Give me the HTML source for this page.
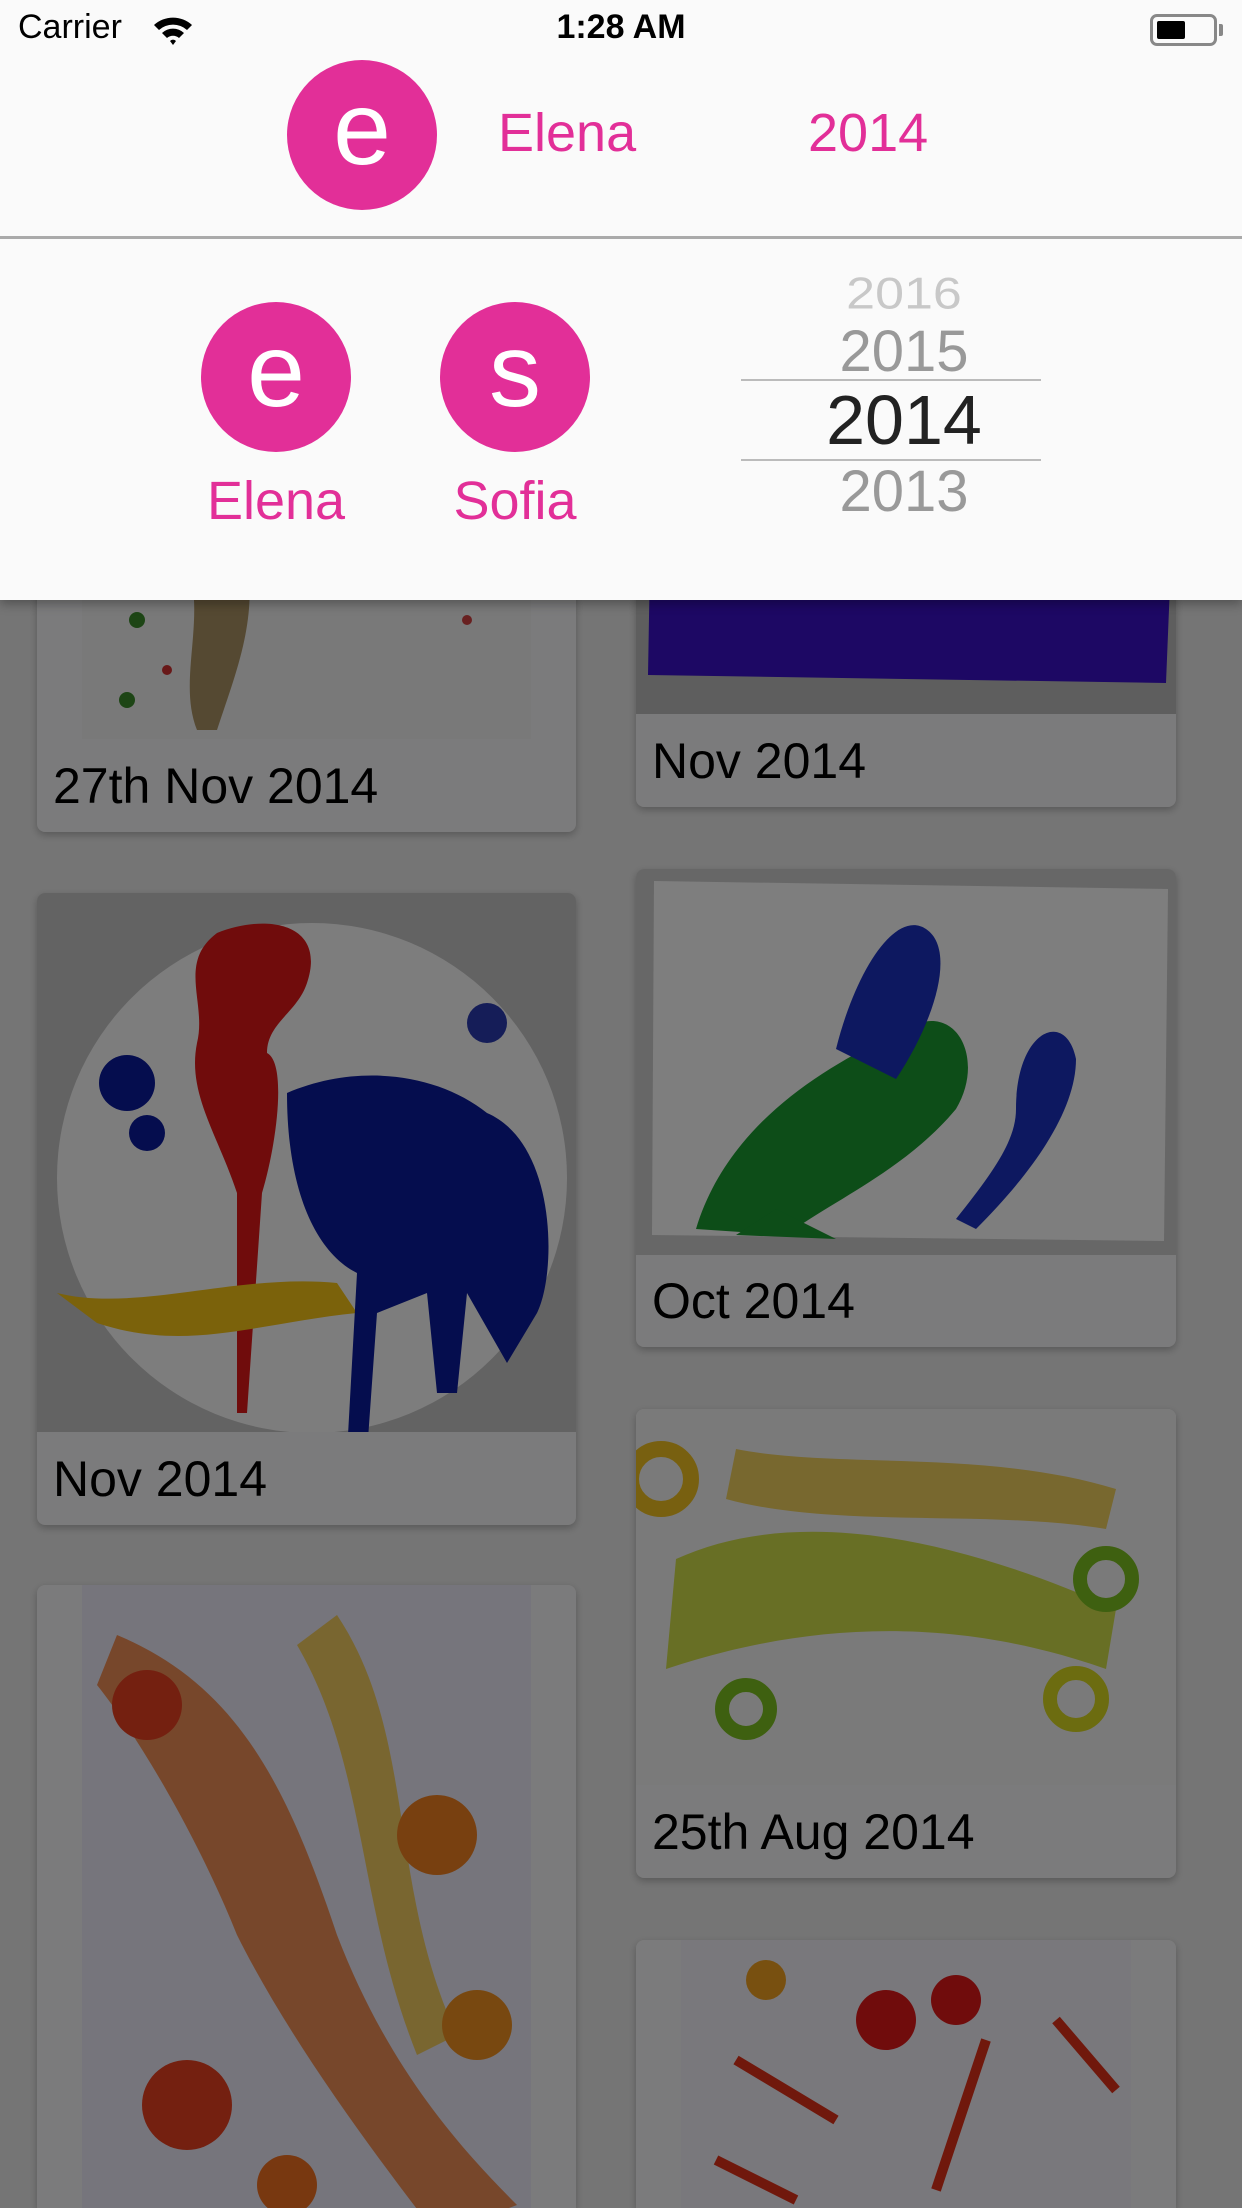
<!DOCTYPE html>
<html style="width:1242px;height:2208px;overflow:hidden"><head><meta charset="utf-8">
<style>
*{margin:0;padding:0;box-sizing:border-box}
body{width:1242px;height:2208px;overflow:hidden;position:relative;background:#ebebeb;font-family:"Liberation Sans",sans-serif}
.card{position:absolute;background:#f7f7f8;border-radius:8px;box-shadow:0 3px 8px rgba(0,0,0,.25);overflow:hidden}
.card .lbl{position:absolute;left:16px;bottom:0;height:92px;line-height:92px;font-size:50px;color:#000}
.img{position:absolute;left:0;top:0;width:100%}
#ov{position:absolute;left:0;top:0;width:1242px;height:2208px;background:rgba(0,0,0,.5)}
#hdr{position:absolute;left:0;top:0;width:1242px;height:600px;background:#fafafa;box-shadow:0 4px 10px rgba(0,0,0,.3)}
.av{position:absolute;width:150px;height:150px;border-radius:50%;background:#e22f98;color:#fff;text-align:center;line-height:138px;font-size:104px}
.pk{position:absolute;color:#e22f98;font-size:54px}
.yr{position:absolute;left:780px;width:248px;text-align:center}
</style></head><body>

<div class="card" style="left:37px;top:560px;width:539px;height:272px">
 <svg class="img" width="539" height="179" style="top:0"><rect x="45" width="449" height="179" fill="#f2f2f2"/>
 <path d="M150 0 C170 60 140 120 160 170 L180 170 C200 110 220 60 210 0Z" fill="#8b6a2a" opacity=".7"/>
 <circle cx="230" cy="20" r="14" fill="#c0202a"/><circle cx="100" cy="60" r="8" fill="#3a8a2a"/><circle cx="380" cy="30" r="8" fill="#5aa030"/><circle cx="430" cy="60" r="5" fill="#d04040"/><circle cx="90" cy="140" r="8" fill="#3a8a2a"/><circle cx="130" cy="110" r="5" fill="#d03030"/></svg>
 <div class="lbl">27th Nov 2014</div></div>

<div class="card" style="left:636px;top:560px;width:540px;height:247px">
 <svg class="img" width="540" height="154"><rect width="540" height="154" fill="#bdbdbd"/><path d="M14 0 L535 0 L530 123 L12 115Z" fill="#3a10c8"/></svg>
 <div class="lbl">Nov 2014</div></div>

<div class="card" style="left:37px;top:893px;width:539px;height:632px">
 <svg class="img" width="539" height="539"><rect width="539" height="539" fill="#c6c6c6"/><circle cx="275" cy="285" r="255" fill="#fbfbfb"/>
 <path d="M180 40 C230 20 290 30 270 90 C260 120 230 130 230 160 C250 170 240 250 225 300 L210 520 L200 520 L200 300 C180 240 150 200 160 150 C170 110 140 70 180 40Z" fill="#e01818"/>
 <path d="M20 400 C100 420 200 380 300 390 L320 420 C220 430 150 460 60 430Z" fill="#f7c417"/>
 <path d="M250 200 C320 170 400 180 450 220 C520 250 520 380 500 420 L470 470 L430 400 L420 500 L400 500 L390 400 L340 420 L330 560 L310 560 L320 380 C280 360 250 300 250 200Z" fill="#0a1a9c"/>
 <circle cx="90" cy="190" r="28" fill="#0a1a9c"/><circle cx="110" cy="240" r="18" fill="#0a1a9c"/><circle cx="450" cy="130" r="20" fill="#2a3ab0"/></svg>
 <div class="lbl">Nov 2014</div></div>

<div class="card" style="left:636px;top:869px;width:540px;height:478px">
 <svg class="img" width="540" height="386"><rect width="540" height="386" fill="#cfcfcf"/><path d="M18 12 L532 20 L528 372 L16 366Z" fill="#fdfdfd"/>
 <path d="M60 360 C90 260 180 200 270 160 C320 130 350 190 320 240 C270 300 200 330 150 366Z" fill="#1a9a30"/>
 <path d="M200 180 C220 100 260 40 290 60 C320 80 300 150 260 210Z" fill="#1a30c0"/>
 <path d="M380 240 C380 160 430 140 440 190 C440 240 400 300 340 360 L320 350 C360 300 380 270 380 240Z" fill="#1a30c0"/>
 <path d="M140 340 L200 370 L100 366Z" fill="#1a9a30"/></svg>
 <div class="lbl">Oct 2014</div></div>

<div class="card" style="left:37px;top:1585px;width:539px;height:623px;border-radius:8px 8px 0 0">
 <svg class="img" width="539" height="623"><rect x="45" width="449" height="623" fill="#eceaf8"/>
 <path d="M80 50 C200 100 250 200 300 350 C350 480 420 560 480 620 L400 650 C330 560 250 450 200 350 C160 250 100 150 60 100Z" fill="#f07020" opacity=".75"/>
 <path d="M300 30 C380 150 350 300 420 450 L380 470 C320 320 330 180 260 60Z" fill="#f5c020" opacity=".7"/>
 <circle cx="110" cy="120" r="35" fill="#e84020"/><circle cx="400" cy="250" r="40" fill="#f08020"/><circle cx="150" cy="520" r="45" fill="#e84020"/><circle cx="440" cy="440" r="35" fill="#f09020"/><circle cx="250" cy="600" r="30" fill="#f07020"/></svg></div>

<div class="card" style="left:636px;top:1409px;width:540px;height:469px">
 <svg class="img" width="540" height="376"><rect width="540" height="376" fill="#f5f5f5"/>
 <path d="M40 150 C150 100 300 120 480 200 L470 260 C300 200 150 220 30 260Z" fill="#c8d820" opacity=".8"/>
 <path d="M100 40 C200 60 350 40 480 80 L470 120 C350 100 200 120 90 90Z" fill="#f0c020" opacity=".7"/>
 <circle cx="25" cy="70" r="30" fill="none" stroke="#f0c020" stroke-width="16"/><circle cx="470" cy="170" r="26" fill="none" stroke="#7cc020" stroke-width="14"/><circle cx="440" cy="290" r="26" fill="none" stroke="#d8d820" stroke-width="14"/><circle cx="110" cy="300" r="24" fill="none" stroke="#7cc020" stroke-width="14"/></svg>
 <div class="lbl">25th Aug 2014</div></div>

<div class="card" style="left:636px;top:1940px;width:540px;height:268px;border-radius:8px 8px 0 0">
 <svg class="img" width="540" height="268"><rect x="45" width="450" height="268" fill="#f3f1f8"/>
 <circle cx="250" cy="80" r="30" fill="#e01818"/><circle cx="320" cy="60" r="25" fill="#e01818"/><circle cx="130" cy="40" r="20" fill="#f0a020"/>
 <path d="M100 120 L200 180 M350 100 L300 250 M420 80 L480 150 M80 220 L160 260" stroke="#e03018" stroke-width="10"/></svg></div>

<div id="ov"></div>

<div id="hdr">
 <div style="position:absolute;left:18px;top:8px;font-size:34px;color:#000">Carrier</div>
 <svg style="position:absolute;left:152px;top:14px" width="42" height="32" viewBox="0 0 42 32"><path d="M2 11 A28 28 0 0 1 40 11 L35 16 A21 21 0 0 0 7 16Z M10 19 A16 16 0 0 1 32 19 L27 24 A9 9 0 0 0 15 24Z M18 27 L21 31 L24 27 A4 4 0 0 0 18 27Z" fill="#000"/></svg>
 <div style="position:absolute;left:0;width:1242px;text-align:center;top:8px;font-size:34px;font-weight:bold;color:#000">1:28 AM</div>
 <div style="position:absolute;left:1150px;top:14px;width:67px;height:32px;border:3px solid #888;border-radius:7px"><div style="margin:4px;width:28px;height:18px;background:#000;border-radius:2px"></div></div>
 <div style="position:absolute;left:1219px;top:24px;width:4px;height:12px;background:#888;border-radius:0 2px 2px 0"></div>

 <div class="av" style="left:287px;top:60px">e</div>
 <div class="pk" style="left:498px;top:102px">Elena</div>
 <div class="pk" style="left:808px;top:102px">2014</div>
 <div style="position:absolute;left:0;top:236px;width:1242px;height:3px;background:#aaa"></div>

 <div class="av" style="left:201px;top:302px">e</div>
 <div class="av" style="left:440px;top:302px">s</div>
 <div class="pk" style="left:126px;width:300px;text-align:center;top:470px">Elena</div>
 <div class="pk" style="left:365px;width:300px;text-align:center;top:470px">Sofia</div>

 <div style="position:absolute;left:780px;top:270px;width:248px;height:44px;overflow:hidden"><div class="yr" style="left:0;top:-6px;font-size:52px;color:#c8c8c8;transform:scaleY(.85)">2016</div></div>
 <div class="yr" style="top:318px;font-size:58px;color:#999">2015</div>
 <div style="position:absolute;left:741px;top:379px;width:300px;height:2px;background:#bbb"></div>
 <div class="yr" style="top:380px;font-size:70px;color:#222">2014</div>
 <div style="position:absolute;left:741px;top:459px;width:300px;height:2px;background:#bbb"></div>
 <div class="yr" style="top:458px;font-size:58px;color:#999">2013</div>
</div>
</body></html>
